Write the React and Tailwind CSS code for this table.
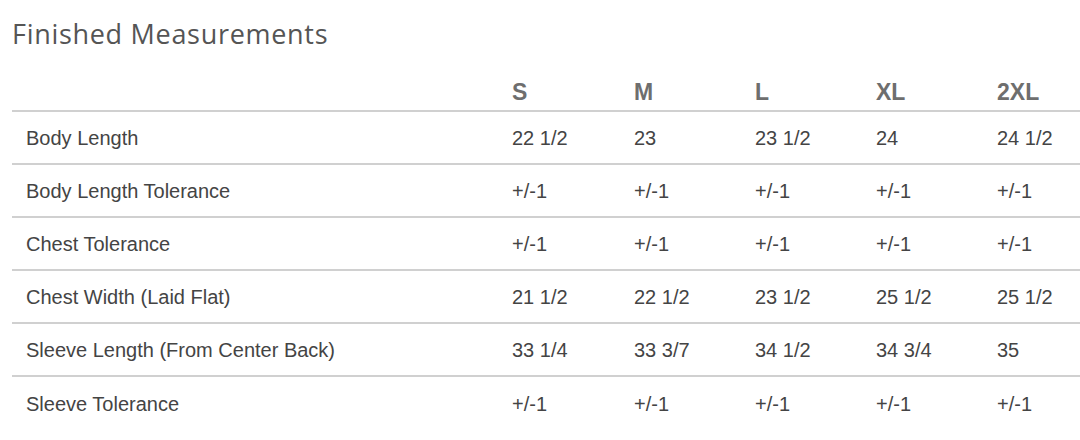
const sizes = ["S", "M", "L", "XL", "2XL"];

const rows = [
  ["Body Length", "22 1/2", "23", "23 1/2", "24", "24 1/2"],
  ["Body Length Tolerance", "+/-1", "+/-1", "+/-1", "+/-1", "+/-1"],
  ["Chest Tolerance", "+/-1", "+/-1", "+/-1", "+/-1", "+/-1"],
  ["Chest Width (Laid Flat)", "21 1/2", "22 1/2", "23 1/2", "25 1/2", "25 1/2"],
  ["Sleeve Length (From Center Back)", "33 1/4", "33 3/7", "34 1/2", "34 3/4", "35"],
  ["Sleeve Tolerance", "+/-1", "+/-1", "+/-1", "+/-1", "+/-1"],
];

const grid = "grid grid-cols-[500px_122px_121px_121px_121px_1fr]";

export default function App() {
  return (
    <div className="w-[1080px] h-[440px] bg-white overflow-hidden pl-3">
      <h2 className="text-[27px] leading-[32px] pt-[18px] tracking-[0.7px] text-[#555] font-['Open_Sans',sans-serif]">
        Finished Measurements
      </h2>
      <div className="font-['Liberation_Sans',Arial,sans-serif] mt-[20px]">
        <div className={`${grid} h-[42px] pt-[4px] items-center border-b-2 border-[#d0d0d0] text-[23px] font-bold text-[#6e6e6e]`}>
          <div></div>
          {sizes.map((s) => (
            <div key={s}>{s}</div>
          ))}
        </div>
        {rows.map((r, i) => (
          <div
            key={r[0]}
            className={`${grid} h-[53px] pt-[1px] items-center text-[20px] text-[#444] ${i < rows.length - 1 ? "border-b-2 border-[#d0d0d0]" : ""}`}
          >
            <div className="pl-[14px]">{r[0]}</div>
            {r.slice(1).map((v, j) => (
              <div key={j}>{v}</div>
            ))}
          </div>
        ))}
      </div>
    </div>
  );
}
